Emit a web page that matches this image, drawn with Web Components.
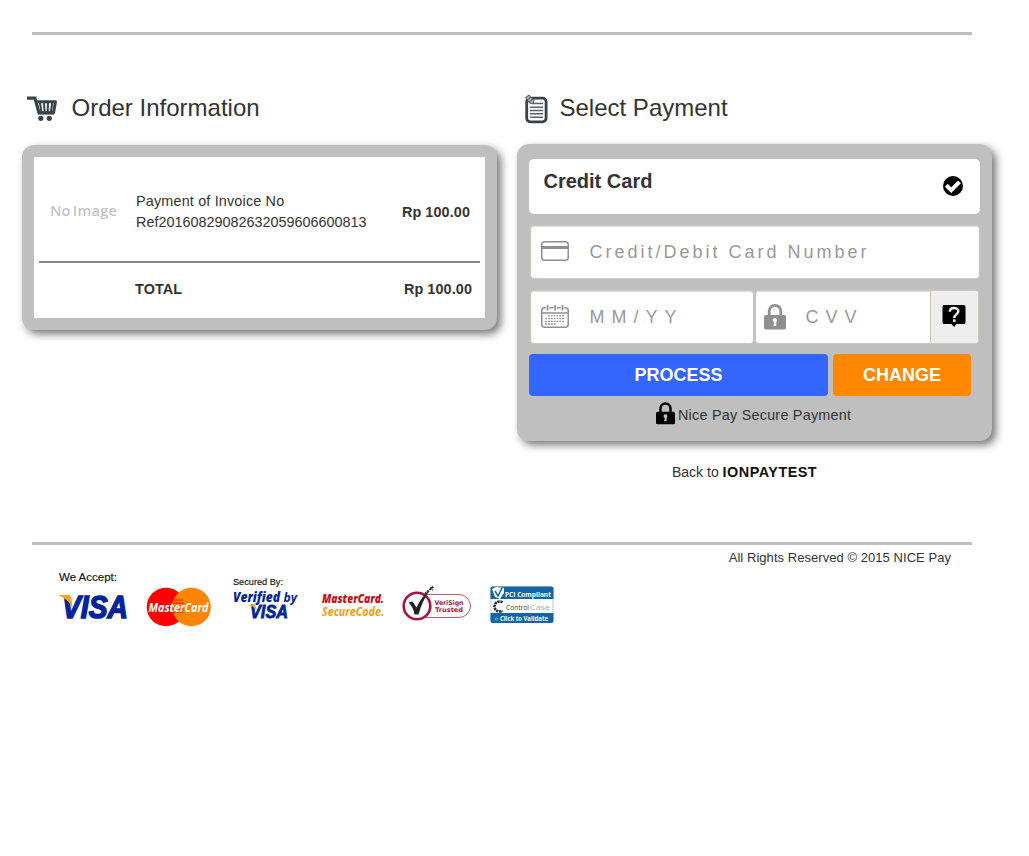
<!DOCTYPE html>
<html lang="en"><head><meta charset="utf-8"><title>Nice Pay</title>
<style>
body{margin:0;background:#fff;color:#333;font-family:"Liberation Sans",Arial,sans-serif;font-size:14.4px}
</style></head><body>
<pay-page></pay-page>
<script>
const define=(name,html)=>customElements.define(name,class extends HTMLElement{
  constructor(){super();this.attachShadow({mode:'open'}).innerHTML=html;}
});

define('cart-icon',`<style>:host,svg{display:block;width:30px;height:26px}</style>
<svg viewBox="0 0 30 26" fill="none" stroke="#37434a"><path d="M0 2.200h8l4 14.800h15" stroke-width="3.200"/><path d="M8.500 5.800H28.500L26.500 16.800H11.500" stroke-width="3" stroke-linejoin="round"/><path d="M12.800 6l1.800 11M17 6l.7 11M21 6l-.3 11M25.300 6l-1.500 11" stroke-width="2"/><circle cx="13.800" cy="22.300" r="2.600" fill="#37434a" stroke="none"/><circle cx="22.300" cy="22.300" r="2.600" fill="#37434a" stroke="none"/></svg>`);

define('note-icon',`<style>:host,svg{display:block;width:24px;height:29px}</style>
<svg viewBox="0 0 24 29" fill="none" stroke="#37434a"><rect x="1.700" y="3.200" width="19.400" height="23.600" rx="3.500" stroke-width="2.800"/><path d="M8 8.500h10M5 12.300h13M5 15.500h13M5 18.800h13M5 22.200h13" stroke="#59636a" stroke-width="1.500"/><path d="M.5 2.500L4 0l5 5.500-1 3.500-3.500-1z" fill="#aaa" stroke="#555" stroke-width="1"/><path d="M2 5l4-3M4 7l4-3" stroke="#444" stroke-width=".8"/></svg>`);

define('check-icon',`<style>:host,svg{display:block;width:20px;height:20px}</style>
<svg viewBox="0 0 20 20"><circle cx="10" cy="10" r="10"/><path d="M3.300 9.300l4.900 4.800 8.300-8.300" fill="none" stroke="#fff" stroke-width="4"/></svg>`);

define('card-icon',`<style>:host,svg{display:block;width:28px;height:20px}</style>
<svg viewBox="0 0 28 20" fill="none" stroke="#8f8f8f"><rect x=".75" y=".75" width="26.5" height="18.5" rx="3" stroke-width="1.5"/><path d="M1 6.500h26" stroke-width="3"/></svg>`);

define('calendar-icon',`<style>:host,svg{display:block;width:28px;height:24px}</style>
<svg viewBox="0 0 28 24" fill="none" stroke="#8f8f8f"><rect x=".75" y="2.750" width="26.500" height="19.500" rx="3" stroke-width="1.500"/><path d="M1 8h26" stroke-width="1.300"/><path d="M6.500 1v5M14 1v5M21.500 1v5" stroke="#fff" stroke-width="3.500"/><path d="M6.500 0v5.500M14 0v5.500M21.500 0v5.500" stroke-width="1.700"/><path d="M7 10.800h17M4.300 13.600h19.700M4.300 16.300h19.700M4.300 19h11" stroke-width="1.300" stroke-dasharray="1.800 1"/></svg>`);

define('lock-icon',`<style>:host{display:block;width:22px;height:26px;color:#8f8f8f;--hole:#fff}svg{display:block;width:100%;height:100%}</style>
<svg viewBox="0 0 22 26"><path d="M5.200 13V7.200a5.800 5.800 0 0 1 11.600 0V13" fill="none" stroke="currentColor" stroke-width="2.800"/><rect y="11" width="22" height="14.500" rx="1.800" fill="currentColor"/><path d="M11 14a2.200 2.200 0 0 1 1.300 4v4H9.300v-1.200h.7v-2.600A2.200 2.200 0 0 1 11 14z" style="fill:var(--hole)"/></svg>`);

define('help-icon',`<style>:host,svg{display:block;width:24px;height:22px}</style>
<svg viewBox="0 0 24 22"><path d="M2 0h20a2 2 0 0 1 1.500 2v15.500a1.500 1.500 0 0 1-1.500 1.500h-7.500L12 22l-2.500-3H2A1.500 1.500 0 0 1 .5 17.500V2A2 2 0 0 1 2 0z"/><path d="M7.800 6.800c.1-5.200 8.600-5 8.500-.5 0 3-4.100 3.200-4.100 6.700" fill="none" stroke="#eee" stroke-width="2.500"/><rect x="11" y="14.300" width="2.600" height="2.600" fill="#eee"/></svg>`);

define('section-title',`<style>:host{display:flex;height:36px;font-size:24px;line-height:36px}.i{box-sizing:border-box;width:var(--gap,45px);padding-top:var(--drop,6px);flex:none}</style>
<div class="i"><slot name="icon"></slot></div><slot></slot>`);

define('grey-panel',`<style>:host{display:block;box-sizing:border-box;width:475px;background:#bfbfbf;border-radius:12px;box-shadow:4px 4px 8px #777;padding:12px}</style><slot></slot>`);

define('order-summary',`<style>
:host{display:block;background:#fff;height:161px;padding:0 5px;box-sizing:border-box}
.item{display:flex;align-items:center;border-bottom:2px solid #888;box-sizing:border-box;padding-top:6px;height:106px}
.no{width:86px;padding-left:11px;font:600 14.500px/20px "Open Sans",sans-serif;color:#c4c4c4;white-space:nowrap;word-spacing:-2px;letter-spacing:.25px;padding-bottom:3px}
.d{flex:1;line-height:21px}.d span{letter-spacing:.17px}b{white-space:nowrap;letter-spacing:.1px}
.item b{padding-right:10px}
.total{display:flex;justify-content:space-between;padding:0 8px 0 96px;line-height:52px}
</style>
<div class="item"><div class="no">No Image</div><div class="d"><span>Payment of Invoice No</span><br>Ref20160829082632059606600813</div><b>Rp 100.00</b></div>
<div class="total"><b>TOTAL</b><b>Rp 100.00</b></div>`);

define('pay-field',`<style>
:host{display:flex;box-sizing:border-box;height:54px;background:#fff;border:1px solid #d0c7b9;border-radius:4px;box-shadow:inset 0 1px 1px #ddd;align-items:center;font-size:18px;color:#999;letter-spacing:var(--ls,7px);white-space:nowrap;overflow:hidden}
.i{width:var(--iw,48.500px);flex:none}.t{flex:1}
</style><div class="i"><slot name="icon"></slot></div><div class="t"><slot></slot></div><slot name="end"></slot>`);

define('pay-form',`<style>
:host{display:flex;flex-direction:column;padding-top:3px;height:270px}
.method{display:flex;justify-content:space-between;height:55px;border-radius:5px;background:#fff;padding:0 17px 0 14.500px;font:bold 20px/44px "Liberation Sans",sans-serif}
.method check-icon{padding-top:17px}
.number{margin:11px 0 0 1px;padding-left:10px;--ls:3px}
.number card-icon{margin-top:-2px}
.two{display:flex;gap:1px;margin:11px 1px 0}
.two pay-field{width:224px;padding-left:10px}
.two calendar-icon,.two .cvv>lock-icon{margin-top:-1px}
.two .cvv{--iw:41.500px;padding-left:8px}
.help{box-sizing:border-box;width:48px;height:52px;background:#eee;border-left:1px solid #d0c7b9;padding:14px 0 0 11px}
.buttons{display:flex;gap:5px;margin-top:10px}
.buttons div{height:42px;border-radius:4px;color:#fff;font:bold 18px/42px "Liberation Sans",sans-serif;text-align:center;width:138px;background:#f80}
.buttons .go{width:299px;background:#36f}
.secure{display:flex;margin:6px 0 0 127px;gap:3px;line-height:27px;white-space:nowrap;letter-spacing:.23px}
.secure lock-icon{width:19px;height:23px;color:#000;--hole:#bfbfbf}
</style>
<div class="method">Credit Card<check-icon></check-icon></div>
<pay-field class="number"><card-icon slot="icon"></card-icon>Credit/Debit Card Number</pay-field>
<div class="two"><pay-field><calendar-icon slot="icon"></calendar-icon>MM/YY</pay-field>
<pay-field class="cvv"><lock-icon slot="icon"></lock-icon>CVV<div class="help" slot="end"><help-icon></help-icon></div></pay-field></div>
<div class="buttons"><div class="go">PROCESS</div><div>CHANGE</div></div>
<div class="secure"><lock-icon></lock-icon><span>Nice Pay Secure Payment</span></div>`);

define('trust-logos',`<style>:host{display:block;width:520px;height:66px}svg{display:block}text{font-family:"Open Sans",sans-serif;font-weight:700}.a{font-family:"Liberation Sans",sans-serif;font-weight:400;fill:#111;stroke:#111;stroke-width:.15px}.v,.visa{font-style:italic;fill:#03259b}.l{font-family:"Open Sans",sans-serif;font-weight:800}.visa{font-family:"Liberation Sans",sans-serif;stroke:#03259b}.vs{font-family:Verdana,"DejaVu Sans",sans-serif;fill:#aa1238}</style>
<svg width="520" height="66" viewBox="50 566 520 66">
<text class="a" x="59" y="581" font-size="11" textLength="58" lengthAdjust="spacingAndGlyphs">We Accept:</text>
<text class="visa" x="62" y="617.500" font-size="30.500" stroke-width="1.500" textLength="66" lengthAdjust="spacingAndGlyphs">VISA</text><path d="M58 595h9q4 0 4.500 4l1 9q-4-9-14.500-13z" fill="#f9a51a"/>
<circle cx="166" cy="607" r="19.300" fill="#f00"/><circle cx="191.500" cy="607" r="19.300" fill="#ff8400"/><path d="M174 600h9M173 603h11M173 606h11M173 609h11M174 612h9" stroke="#f00"/>
<text x="148.500" y="612" font-size="13" font-style="italic" fill="#fff" textLength="60" lengthAdjust="spacingAndGlyphs">MasterCard</text>
<text class="a" x="233" y="585" font-size="9.500" textLength="50" lengthAdjust="spacingAndGlyphs">Secured By:</text>
<text class="v l" x="233" y="602" font-size="14.500" textLength="47" lengthAdjust="spacingAndGlyphs">Verified</text><text class="v l" x="283.500" y="602" font-size="13" textLength="13.500" lengthAdjust="spacingAndGlyphs" style="font-weight:700">by</text>
<text class="visa" x="250" y="617.700" font-size="17.500" stroke-width=".8" textLength="38" lengthAdjust="spacingAndGlyphs">VISA</text><path d="M248 605h6q2 0 2.500 5-3-4-8.500-5z" fill="#f9a51a"/>
<text class="l" x="322" y="603" font-size="12" font-style="italic" fill="#cb0d16" textLength="62" lengthAdjust="spacingAndGlyphs">MasterCard.</text>
<text class="l" x="322" y="615.700" font-size="12" font-style="italic" fill="#fb9b0b" style="font-weight:700" textLength="62" lengthAdjust="spacingAndGlyphs">SecureCode.</text>
<path d="M425 594.500h34a11.500 11.500 0 0 1 0 23h-34" fill="#fff" stroke="#c05a70"/><circle cx="417" cy="606" r="13.300" fill="#fff" stroke="#aa1238" stroke-width="2.600"/><path d="M408.500 602.500l4-1 4 6q5-11 13-17-7 10-11 24h-4q-1-7-6-12z" fill="#222"/><path d="M425 594l9-8M427 591l2 2M430 588l3 2" stroke="#333" stroke-width="2.200" stroke-dasharray="2 1"/>
<text class="vs" x="434.500" y="605" font-size="6.500" textLength="29" lengthAdjust="spacingAndGlyphs">VeriSign</text><text class="vs" x="435" y="611.500" font-size="6.500" textLength="28" lengthAdjust="spacingAndGlyphs">Trusted</text>
<rect x="491" y="587" width="62" height="35.500" rx="2" fill="#fff" stroke="#b8c6d2"/><path d="M490.500 599v-11q0-1.500 2-1.500h59q2 0 2 1.500v11zM490.500 613h63v8q0 2-2 2h-59q-2 0-2-2z" fill="#1265a8"/>
<path d="M492 589l4-2 8 1v5l-4 6-5-2z" fill="#fff"/><path d="M495 591l3 5 4-8" fill="none" stroke="#1265a8" stroke-width="1.500"/>
<text x="505" y="596.500" font-size="7.500" fill="#fff" textLength="46" lengthAdjust="spacingAndGlyphs">PCI Compliant</text>
<path d="M502.500 602.500a5 5 0 1 0 0 8" fill="none" stroke="#202b4d" stroke-width="2.500" stroke-dasharray="2.400 .6"/>
<text x="506" y="610" font-size="8" fill="#444" style="font-weight:400" textLength="23" lengthAdjust="spacingAndGlyphs">Control</text><text x="530" y="610" font-size="8" fill="#aaa" style="font-weight:400" textLength="20" lengthAdjust="spacingAndGlyphs">Case</text>
<text x="494" y="620.500" font-size="7" fill="#50b9bb">»</text><text x="500" y="620.500" font-size="6.500" fill="#fff" textLength="48" lengthAdjust="spacingAndGlyphs">Click to Validate</text>
</svg>`);

define('pay-page',`<style>
:host{display:block;width:1029px;height:856px;overflow:hidden;box-sizing:border-box;padding-top:32px}
hr{border:0;height:3px;background:#bfbfbf;width:940px;margin:0 0 0 32px}
.cols{display:flex;gap:20px;padding:55px 0 0 22px;height:452px}
.cols>div{width:475px}
.l section-title{padding:0 0 19px 5px;--gap:44.500px}
.r section-title{padding:0 0 18px 8px;--gap:34.500px;--drop:5px}
.back{padding:22px 0 0 155px;line-height:18px;white-space:nowrap;font-size:14px}
.back b{color:#111;font-size:14.400px;letter-spacing:.5px}
.copy{line-height:17px;font-size:13px;text-align:right;margin:4px 78px 0 0;letter-spacing:.05px}
trust-logos{margin-left:50px}
</style><hr>
<div class="cols">
<div class="l"><section-title><cart-icon slot="icon"></cart-icon>Order Information</section-title><grey-panel><order-summary></order-summary></grey-panel></div>
<div class="r"><section-title><note-icon slot="icon"></note-icon>Select Payment</section-title><grey-panel><pay-form></pay-form></grey-panel><div class="back">Back to <b>IONPAYTEST</b></div></div>
</div><hr><div class="copy">All Rights Reserved © 2015 NICE Pay</div><trust-logos></trust-logos>`);
</script></body></html>
